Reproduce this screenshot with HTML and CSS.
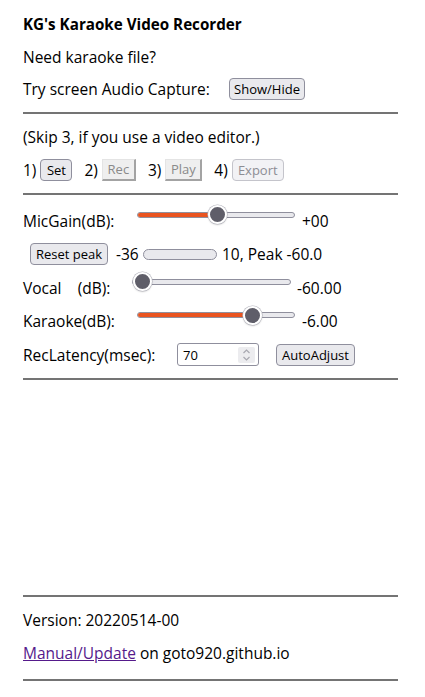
FILE: index.html
```html
<!DOCTYPE html>
<html lang="en">
<head>
<meta charset="utf-8">
<title>KG's Karaoke Video Recorder</title>
<link rel="stylesheet" href="styles.css">
</head>
<body>
<div class="page">
  <div class="row row-title">KG's Karaoke Video Recorder</div>
  <div class="row">Need karaoke file?</div>
  <div class="row row-short">
    <span class="lbl-capture">Try screen Audio Capture:</span>
    <button class="btn btn-show">Show/Hide</button>
  </div>
  <hr class="rule rule-1">
  <div class="row row-short">(Skip 3, if you use a video editor.)</div>
  <div class="row steps">
    <span class="step">1)</span><button class="btn btn-set">Set</button>
    <span class="step">2)</span><button class="btn btn-old btn-rec" disabled>Rec</button>
    <span class="step">3)</span><button class="btn btn-old btn-play" disabled>Play</button>
    <span class="step">4)</span><button class="btn btn-off btn-export" disabled>Export</button>
  </div>
  <hr class="rule rule-2">

  <div class="row ctl">
    <span class="lbl lbl-114">MicGain(dB):</span>
    <div class="slider"><div class="track"><div class="fill" style="width:80px"></div></div><div class="thumb" style="left:80px"></div></div>
    <span class="val">+00</span>
  </div>
  <div class="row ctl">
    <button class="btn btn-reset">Reset peak</button>
    <span class="meter-min">-36</span>
    <div class="meter"></div>
    <span>10, Peak -60.0</span>
  </div>
  <div class="row ctl">
    <span class="lbl lbl-109"><span class="vocal-name">Vocal</span>(dB):</span>
    <div class="slider slider-vocal"><div class="track"><div class="fill" style="width:0px"></div></div><div class="thumb" style="left:10px"></div></div>
    <span class="val">-60.00</span>
  </div>
  <div class="row ctl">
    <span class="lbl lbl-114">Karaoke(dB):</span>
    <div class="slider"><div class="track"><div class="fill" style="width:115px"></div></div><div class="thumb" style="left:115px"></div></div>
    <span class="val">-6.00</span>
  </div>
  <div class="row ctl">
    <span class="lbl lbl-154">RecLatency(msec):</span>
    <div class="num">
      <span class="num-text">70</span>
      <span class="spin">
        <svg width="9" height="14" viewBox="0 0 9 14"><path d="M1.5 5 L4.5 2 L7.5 5" fill="none" stroke="#a8a8b0" stroke-width="1.2"/><path d="M1.5 9 L4.5 12 L7.5 9" fill="none" stroke="#a8a8b0" stroke-width="1.2"/></svg>
      </span>
    </div>
    <button class="btn btn-auto">AutoAdjust</button>
  </div>
  <hr class="rule rule-3">

  <div class="stage"></div>

  <hr class="rule rule-4">
  <div class="row">Version: 20220514-00</div>
  <div class="row"><span><a class="link" href="#">Manual/Update</a> on goto920.github.io</span></div>
  <hr class="rule rule-5">
</div>
</body>
</html>
```
FILE: styles.css
```css
body {
  margin: 0;
  background: #fff;
  color: #000;
  font-family: "Open Sans", "Noto Sans", sans-serif;
  font-size: 15.5px;
}

.page {
  width: 375px;
  padding: 8px 0 0 23px;
  display: flex;
  flex-direction: column;
}

.row {
  height: 33px;
  display: flex;
  align-items: center;
  white-space: nowrap;
}

.row-title {
  height: 32px;
  font-weight: bold;
  font-size: 15.2px;
}

.row-short {
  height: 32px;
}

.rule {
  border: 0;
  height: 2px;
  width: 375px;
  background: #747474;
  margin: 7px 0;
}

.rule-2 { margin: 7px 0 9.3px; }
.rule-3 { margin: 6.7px 0 0; }
.rule-4 { margin: 0 0 7px; }
.rule-5 { margin: 9px 0 0; }

.stage {
  height: 215px;
}

.lbl-capture {
  width: 206px;
}

/* buttons */
.btn {
  box-sizing: border-box;
  height: 22px;
  padding: 0;
  margin: 0;
  display: inline-flex;
  align-items: center;
  justify-content: center;
  font-family: "Open Sans", "Noto Sans", sans-serif;
  font-size: 13px;
  color: #000;
  background: #e9e9ed;
  border: 1px solid #8f8f9d;
  border-radius: 4px;
}

.btn-show { width: 76px; height: 22px; }
.btn-set { width: 32px; }
.btn-reset { width: 78px; margin-left: 7px; }
.btn-auto { width: 79px; margin-left: 17px; }

.btn-old {
  border-radius: 0;
  background: #efefef;
  color: #8a8a8a;
  border-style: solid;
  border-width: 1px 2px 2px 1px;
  border-color: #e4e4e4 #a3a3a3 #a3a3a3 #e4e4e4;
}

.btn-rec { width: 34px; }
.btn-play { width: 37px; }

.btn-off {
  background: #f2f2f5;
  color: #8d8d94;
  border-color: #c4c4cb;
}

.btn-export { width: 52px; }

.steps .step {
  margin-right: 4px;
}

.steps .btn {
  margin-right: 12px;
}

/* control rows */
.ctl {
  height: 33.4px;
}

.lbl { display: inline-block; }
.lbl-114 { width: 114px; }
.lbl-109 { width: 109px; }
.lbl-154 { width: 154px; }

.vocal-name {
  display: inline-block;
  width: 54.7px;
}

.slider {
  position: relative;
  width: 158px;
  height: 20px;
  margin-bottom: 12px;
  display: flex;
  align-items: center;
}

.slider-vocal { width: 159px; }

.track {
  box-sizing: border-box;
  width: 100%;
  height: 6px;
  border: 1px solid #8f8f9d;
  border-radius: 3px;
  background: #e9e9ed;
  overflow: hidden;
}

.fill {
  height: 100%;
  background: #e95420;
}

.thumb {
  position: absolute;
  top: 50%;
  width: 19px;
  height: 19px;
  box-sizing: border-box;
  margin: -9.5px 0 0 -9.5px;
  border-radius: 50%;
  background: #5f5e69;
  border: 2px solid #fff;
  box-shadow: 0 0 0 0.6px #b8b8c0, 0 1px 2px rgba(0, 0, 0, 0.2);
}

.val {
  margin-left: 7px;
}

.slider-vocal + .val {
  margin-left: 6px;
}

.meter-min {
  width: 27px;
  margin-left: 8px;
}

.meter {
  box-sizing: border-box;
  width: 74px;
  height: 11px;
  margin-right: 5px;
  border: 1px solid #8f8f9d;
  border-radius: 6px;
  background: #e9e9ed;
}

/* number input */
.num {
  box-sizing: border-box;
  width: 82px;
  height: 23px;
  display: flex;
  align-items: center;
  justify-content: space-between;
  padding: 0 3px 0 5px;
  border: 1px solid #8f8f9d;
  border-radius: 3px;
  background: #fff;
  font-size: 13px;
}

.spin {
  width: 17px;
  height: 16px;
  display: flex;
  align-items: center;
  justify-content: center;
  background: #ececef;
  border-radius: 2px;
}

.link {
  color: #551a8b;
  text-decoration: underline;
}
```
